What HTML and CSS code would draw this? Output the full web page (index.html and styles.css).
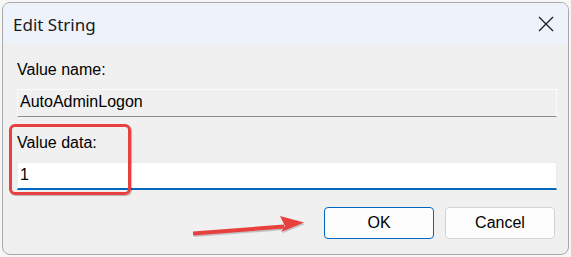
FILE: index.html
```html
<!DOCTYPE html>
<html lang="en">
<head>
    <meta charset="UTF-8">
    <title>Edit String</title>
    <link rel="stylesheet" href="styles.css">
</head>
<body>
    <div class="dialog">
        <div class="titlebar">
            <span class="title">Edit String</span>
            <svg class="close" width="16" height="16" viewBox="0 0 16 16">
                <path d="M1 1 L15 15 M15 1 L1 15" stroke="#1b1b1b" stroke-width="1.3" fill="none"/>
            </svg>
        </div>
        <div class="content">
            <label class="field-label">Value name:</label>
            <div class="field readonly">AutoAdminLogon</div>

            <label class="field-label gap-top">Value data:</label>
            <div class="field editable">1</div>

            <div class="buttons">
                <button class="btn primary">OK</button>
                <button class="btn">Cancel</button>
            </div>
        </div>
    </div>

    <!-- annotations -->
    <div class="highlight"></div>
    <svg class="arrow" width="571" height="257" viewBox="0 0 571 257">
        <g transform="translate(1,1.5)" fill="#8a8a8a" opacity="0.45">
            <path d="M193 231.5 L284 224.5 L284 228.5 L193 235.5 Z"/>
            <path d="M280 216 L304 222.5 L281 232 L285 226 Z"/>
        </g>
        <g fill="#e8403f">
            <path d="M193 231.5 L284 224.5 L284 228.5 L193 235.5 Z"/>
            <path d="M280 216 L304 222.5 L281 232 L285 226 Z"/>
        </g>
    </svg>
</body>
</html>
```

FILE: styles.css
```css
html, body {
    margin: 0;
    padding: 0;
}
body {
    width: 571px;
    height: 257px;
    background-color: #f6f6f6;
    font-family: "Liberation Sans", Arial, sans-serif;
    color: #000;
    overflow: hidden;
}
.dialog {
    box-sizing: border-box;
    width: 567px;
    height: 253px;
    margin: 2px 0 0 2px;
    border: 1px solid #a9a9a9;
    border-radius: 8px;
    background-color: #f0f0f0;
    overflow: hidden;
    display: flex;
    flex-direction: column;
}
.titlebar {
    height: 41px;
    flex: none;
    display: flex;
    align-items: center;
    justify-content: space-between;
    padding: 0 14px 0 10px;
    background-color: #eef2fb;
}
.title {
    font-family: "Noto Sans", "Open Sans", sans-serif;
    font-size: 17px;
    color: #1a1a1a;
    margin-top: 1px;
}
.close {
    margin-top: 1px;
}
.content {
    display: flex;
    flex-direction: column;
    padding: 17px 11px 0 14px;
}
.field-label {
    font-size: 16px;
    line-height: 18px;
    margin-bottom: 10px;
}
.gap-top {
    margin-top: 17px;
}
.field {
    box-sizing: border-box;
    height: 28px;
    font-size: 16px;
    line-height: 18px;
    padding: 3px 2px 0 2px;
    border: 1px solid #e4e4e4;
}
.field.readonly {
    background-color: #f0f0f0;
    border-color: #fbfbfb;
    border-bottom-color: #8d8d8d;
}
.field.editable {
    background-color: #ffffff;
    border-color: #ececec;
    border-bottom: 2px solid #0067c0;
}
.buttons {
    display: flex;
    justify-content: flex-end;
    gap: 11px;
    margin-top: 17px;
    padding-right: 2px;
}
.btn {
    box-sizing: border-box;
    width: 110px;
    height: 32px;
    font-family: "Liberation Sans", Arial, sans-serif;
    font-size: 16px;
    color: #000;
    background-color: #fdfdfd;
    border: 1px solid #d3d3d3;
    border-radius: 4px;
    padding: 0;
}
.btn.primary {
    border-color: #0067c0;
}
.highlight {
    position: absolute;
    left: 9px;
    top: 124px;
    width: 122px;
    height: 71px;
    box-sizing: border-box;
    border: 3px solid #e8403f;
    border-radius: 6px;
    box-shadow: 1px 1px 1px rgba(0, 0, 0, 0.25);
}
.arrow {
    position: absolute;
    left: 0;
    top: 0;
}
```
